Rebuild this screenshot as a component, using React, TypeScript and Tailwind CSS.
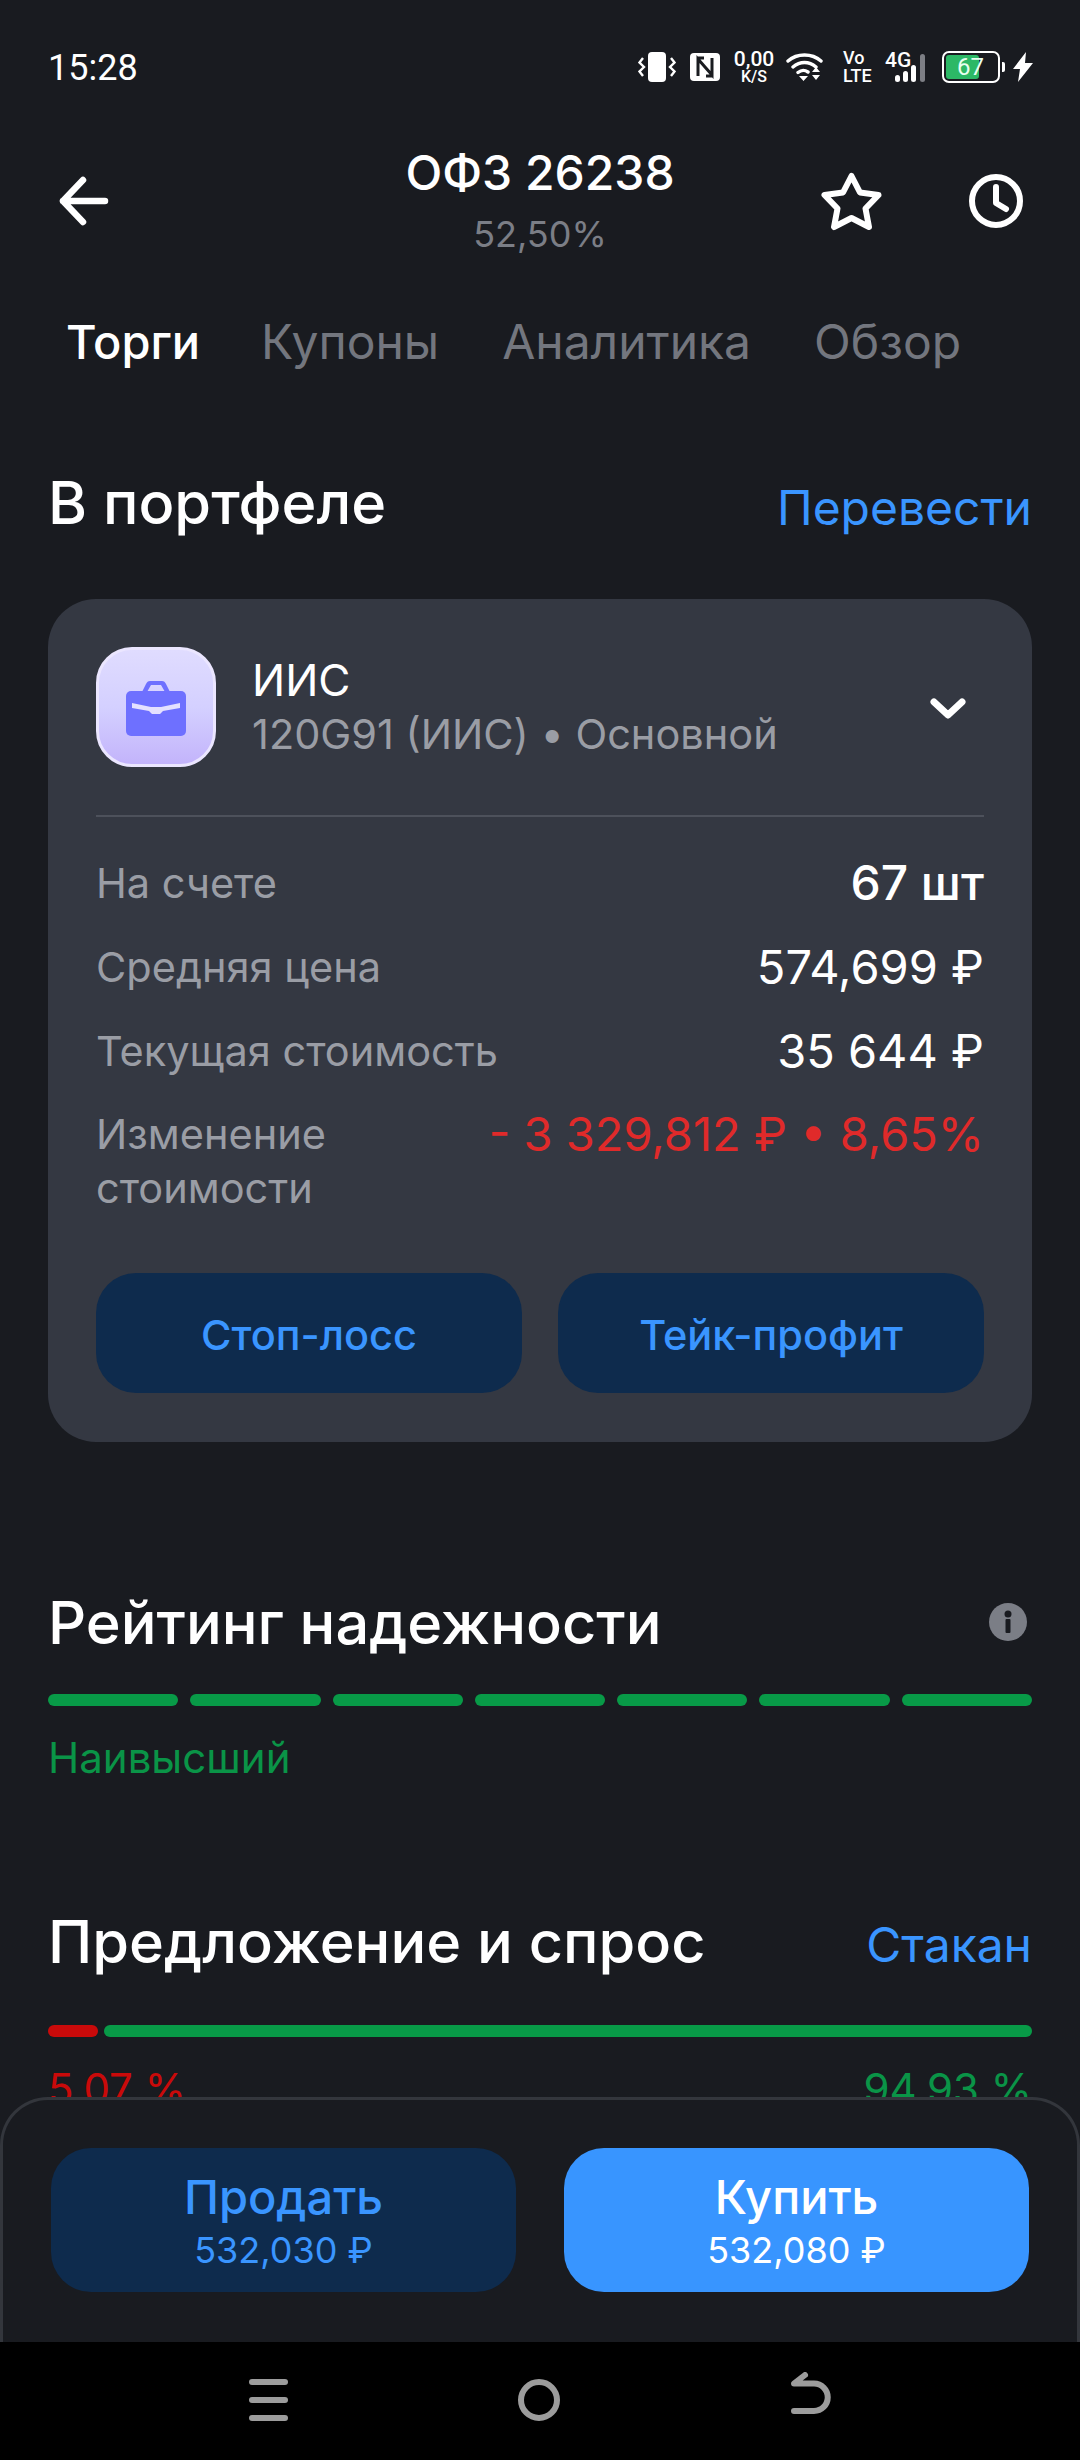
import React from "react";

function StatusIcons() {
  return (
    <div className="flex items-center h-[36px] -translate-y-[1px]">
      {/* vibrate */}
      <svg width="38" height="30" viewBox="0 0 38 30">
        <rect x="10" y="0" width="18" height="30" rx="4" fill="#fff" />
        <path d="M5 6L1.500 10.500 6 15l-4.500 4.500L5 24M33 6l3.500 4.500L32 15l4.500 4.500L33 24" stroke="#fff" strokeWidth="2.400" fill="none" />
      </svg>
      {/* NFC */}
      <svg width="30" height="28" viewBox="0 0 30 28" className="ml-[14px]">
        <rect x="0" y="0" width="30" height="28" rx="4" fill="#fff" />
        <path d="M8 23V6l14 16V5M8 5h6M16 23h6" stroke="#1a1c20" strokeWidth="3" fill="none" />
      </svg>
      <div className="ml-[15px] w-[38px] flex flex-col items-center text-white font-['Roboto'] font-medium">
        <span className="text-[21px] leading-[19px]">0,00</span>
        <span className="text-[16px] leading-[15px]">K/S</span>
      </div>
      {/* wifi */}
      <svg width="37" height="30" viewBox="0 0 37 30" className="ml-[13px]">
        <path d="M2 9C11 1 26 1 35 9M7 15C14 9 23 9 30 15M12 20.500C15 18 19 18 22 20" stroke="#fff" strokeWidth="3.400" fill="none" strokeLinecap="round" />
        <path d="M13 24h9l-4.500 5zM26 20l4-5 4 5zM26 23h8l-4 5z" fill="#fff" />
      </svg>
      <div className="ml-[20px] w-[30px] flex flex-col items-start text-white font-['Roboto'] font-medium">
        <span className="text-[18px] leading-[18px]">Vo</span>
        <span className="text-[18px] leading-[18px]">LTE</span>
      </div>
      <div className="ml-[12px] relative w-[44px] h-[32px]">
        <span className="absolute left-0 top-0 text-white text-[21px] leading-[18px] font-['Roboto'] font-medium">4G</span>
        <svg width="44" height="32" viewBox="0 0 44 32" className="absolute left-0 top-0">
          <rect x="10" y="24" width="5" height="7" rx="2.500" fill="#fff" />
          <rect x="18" y="20" width="5" height="11" rx="2.500" fill="#fff" />
          <rect x="26" y="14" width="5" height="17" rx="2.500" fill="#fff" />
          <rect x="35" y="3" width="5" height="28" rx="2.500" fill="#7d7f85" />
        </svg>
      </div>
      {/* battery */}
      <div className="ml-[13px] relative w-[58px] h-[32px] rounded-[7px] border-[2px] border-white">
        <div className="absolute left-[2px] top-[2px] bottom-[2px] w-[33px] rounded-[3px] bg-[#2cb866]" />
        <span className="absolute left-[13px] top-[2px] text-[#e8fff0] text-[24px] leading-[24px] font-['Roboto']">67</span>
      </div>
      <div className="ml-[2px] w-[3px] h-[10px] rounded-r-[2px] bg-white" />
      <svg width="22" height="30" viewBox="0 0 22 30" className="ml-[7px]">
        <path d="M14 0L1 17h7l-2 13 15-19h-8z" fill="#fff" />
      </svg>
    </div>
  );
}

function Row({ label, value, strong }: { label: string; value: string; strong?: boolean }) {
  return (
    <div className="flex justify-between items-center h-[84px]">
      <span className="text-[41.5px] text-[#9a9da5]">{label}</span>
      <span className={strong ? "text-[48px] text-white font-medium" : "text-[47px] text-white"}>{value}</span>
    </div>
  );
}

export default function App() {
  return (
    <div className="w-[1080px] h-[2460px] bg-[#191b20] flex flex-col overflow-hidden font-['Inter','Roboto',sans-serif]">
      <div className="flex-1 min-h-0 relative overflow-hidden">
        {/* status bar */}
        <div className="h-[90px] pt-[46px] pl-[48px] pr-[46px] flex items-center justify-between">
          <span className="text-[36px] text-white leading-none font-['Roboto']">15:28</span>
          <StatusIcons />
        </div>

        {/* header */}
        <div className="h-[140px] pl-[54px] pr-[57px] flex items-center justify-between relative mt-[42px]">
          <svg width="60" height="60" viewBox="0 0 60 60">
            <path d="M51 29H9M29 8L9 29l20 21" stroke="#fff" strokeWidth="6.500" fill="none" strokeLinecap="round" strokeLinejoin="round" />
          </svg>
          <div className="absolute left-0 right-0 top-[7px] flex flex-col items-center">
            <span className="text-[48px] leading-[68px] font-medium text-white">ОФЗ 26238</span>
            <span className="text-[36px] leading-[50px] text-[#7b7e86] mt-[2px]">52,50%</span>
          </div>
          <div className="flex items-center gap-[86px] -mt-[3px]">
            <svg width="63" height="60" viewBox="0 0 63 60" fill="none" stroke="#fff" strokeWidth="6" strokeLinejoin="round">
              <path d="M31.500 5L40 21.500 58.500 24 45.500 37.500 49 56 31.500 47 14 56 17.500 37.500 4.500 24 23 21.500Z" />
            </svg>
            <svg width="54" height="54" viewBox="0 0 54 54" fill="none" stroke="#fff" strokeWidth="6" strokeLinecap="round" strokeLinejoin="round">
              <circle cx="27" cy="27" r="24" />
              <path d="M27 13v16l10 6" />
            </svg>
          </div>
        </div>

        {/* tabs */}
        <div className="flex items-center h-[70px] mt-[35px] pl-[66px] gap-[63px] text-[48px] text-[#73767e]">
          <span className="text-white font-medium text-[47px] -mr-[2px]">Торги</span>
          <span>Купоны</span>
          <span>Аналитика</span>
          <span>Обзор</span>
        </div>

        {/* portfolio */}
        <section className="px-[48px] mt-[91px]">
          <div className="flex items-center justify-between h-[70px]">
            <h2 className="text-[59.5px] font-medium text-white">В портфеле</h2>
            <span className="text-[48px] text-[#3a95ff] mt-[9px]">Перевести</span>
          </div>
          <div className="mt-[61px] h-[843px] rounded-[48px] bg-[#343842] px-[48px] pt-[48px]">
            <div className="flex items-center h-[120px]">
              <div className="w-[120px] h-[120px] rounded-[36px] border-[3px] border-[#ebe6ff] bg-gradient-to-b from-[#e0dcff] via-[#d4d0ff] to-[#c3b4fb] flex items-center justify-center">
                <svg width="62" height="58" viewBox="0 0 62 58">
                  <path d="M17 14l4-8c1-2 2-3 4-3h12c2 0 3 1 4 3l4 8h-5l-4-7H26l-4 7z" fill="#6e70ff" />
                  <rect x="1" y="13" width="60" height="45" rx="5" fill="#6e70ff" />
                  <path d="M7 25l19 4h10l19-4v5l-17 3-3 3h-8l-3-3-17-3z" fill="#e4e0ff" />
                </svg>
              </div>
              <div className="ml-[36px] flex-1 flex flex-col">
                <span className="text-[44px] leading-[54px] text-white">ИИС</span>
                <span className="text-[41.5px] leading-[54px] text-[#9a9da5]">120G91 (ИИС) • Основной</span>
              </div>
              <svg width="44" height="44" viewBox="0 0 44 44" className="mr-[14px]">
                <path d="M8 17l14 13 14-13" stroke="#fff" strokeWidth="7" fill="none" strokeLinecap="round" strokeLinejoin="round" />
              </svg>
            </div>
            <div className="h-[2px] bg-[#4d515b] mt-[48px]" />
            <div className="mt-[24px]">
              <Row label="На счете" value="67 шт" strong />
              <Row label="Средняя цена" value="574,699 ₽" />
              <Row label="Текущая стоимость" value="35 644 ₽" />
              <div className="flex justify-between items-start mt-[14px]">
                <span className="text-[41.5px] leading-[54px] text-[#9a9da5]">Изменение<br />стоимости</span>
                <span className="text-[47px] leading-[54px] text-[#e02a2a]">- 3 329,812 ₽ • 8,65%</span>
              </div>
            </div>
            <div className="flex gap-[36px] mt-[58px]">
              <button className="flex-1 h-[120px] pt-[4px] rounded-[40px] bg-[#0e2b4d] text-[41.5px] font-medium text-[#3a95ff]">Стоп-лосс</button>
              <button className="flex-1 h-[120px] pt-[4px] rounded-[40px] bg-[#0e2b4d] text-[41.5px] font-medium text-[#3a95ff]">Тейк-профит</button>
            </div>
          </div>
        </section>

        {/* rating */}
        <section className="px-[48px] mt-[141px]">
          <div className="flex items-center justify-between h-[80px]">
            <h2 className="text-[59.5px] font-medium text-white">Рейтинг надежности</h2>
            <svg width="38" height="38" viewBox="0 0 38 38" className="mr-[5px] -mt-[2px]">
              <circle cx="19" cy="19" r="19" fill="#7b7e86" />
              <circle cx="19" cy="11" r="3.500" fill="#191b20" />
              <rect x="16.500" y="16" width="5" height="14" rx="1" fill="#191b20" />
            </svg>
          </div>
          <div className="flex gap-[12px] mt-[31px]">
            {[0, 1, 2, 3, 4, 5, 6].map((i) => (
              <div key={i} className="flex-1 h-[12px] rounded-full bg-[#089a47]" />
            ))}
          </div>
          <div className="mt-[25px] text-[42px] leading-[54px] text-[#0a9447]">Наивысший</div>
        </section>

        {/* bid ask */}
        <section className="px-[48px] mt-[117px]">
          <div className="flex items-center justify-between h-[80px]">
            <h2 className="text-[59.5px] font-medium text-white">Предложение и спрос</h2>
            <span className="text-[48px] text-[#3a95ff] mt-[6px]">Стакан</span>
          </div>
          <div className="flex gap-[6px] mt-[43px]">
            <div className="w-[50px] h-[12px] rounded-full bg-[#c90a0a]" />
            <div className="flex-1 h-[12px] rounded-full bg-[#089a47]" />
          </div>
          <div className="flex justify-between mt-[25px] text-[42px] leading-[54px]">
            <span className="text-[#c90a0a]">5,07 %</span>
            <span className="text-[#0a9447]">94,93 %</span>
          </div>
        </section>

        {/* order panel */}
        <div className="absolute left-0 right-0 bottom-0 h-[245px] rounded-t-[48px] border-t-[3px] border-x-[3px] border-[#33363c] bg-[#191b20] flex gap-[48px] px-[48px] pt-[48px]">
          <button className="flex-1 h-[144px] rounded-[40px] bg-[#0e2b4d] flex flex-col items-center justify-center">
            <span className="text-[47px] leading-[60px] font-medium text-[#3a95ff]">Продать</span>
            <span className="text-[36px] leading-[46px] text-[#3a95ff]">532,030 ₽</span>
          </button>
          <button className="flex-1 h-[144px] rounded-[40px] bg-[#3895ff] flex flex-col items-center justify-center">
            <span className="text-[47px] leading-[60px] font-medium text-white">Купить</span>
            <span className="text-[36px] leading-[46px] text-white">532,080 ₽</span>
          </button>
        </div>
      </div>

      {/* nav bar */}
      <div className="h-[118px] bg-black flex items-center justify-center shrink-0">
        <div className="flex items-center gap-[230px] -mt-[2px]">
          <div className="flex flex-col gap-[12px] w-[39px]">
            <div className="h-[6px] rounded-full bg-[#9c9c9c]" />
            <div className="h-[6px] rounded-full bg-[#9c9c9c]" />
            <div className="h-[6px] rounded-full bg-[#9c9c9c]" />
          </div>
          <div className="w-[42px] h-[42px] rounded-full border-[6px] border-[#9c9c9c]" />
          <svg width="42" height="44" viewBox="0 0 42 44" fill="none" stroke="#9c9c9c" strokeWidth="6" strokeLinecap="round" strokeLinejoin="round" className="-mt-[12px]">
            <path d="M4 39H24a13.700 13.700 0 0 0 0-27.500H4L15 3" />
          </svg>
        </div>
      </div>
    </div>
  );
}
